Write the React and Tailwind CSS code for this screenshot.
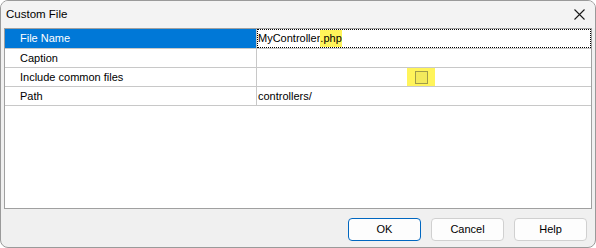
import React from "react";

const rows = [
  { name: "File Name", value: "file", selected: true },
  { name: "Caption", value: "" },
  { name: "Include common files", value: "check" },
  { name: "Path", value: "controllers/" },
];

const PropertyRow = ({ row }) => {
  return (
    <div
      className={`flex border-b border-[#c8c8c8] ${
        row.selected ? "h-[20px]" : "h-[19px]"
      }`}
    >
      <div
        className={`w-[251px] pl-[15px] flex items-center ${
          row.selected ? "bg-[#0078d7] text-white" : "text-black"
        }`}
      >
        {row.name}
      </div>
      <div className="w-px bg-[#c8c8c8]" />
      <div className="flex-1 flex items-center">
        {row.value === "file" ? (
          <div className="flex items-end h-full w-full border border-dotted border-black">
            <span className="h-[17px] flex items-center">MyController</span>
            <span className="bg-[#fff45a] h-[17px] flex items-center">.php</span>
          </div>
        ) : row.value === "check" ? (
          <div className="ml-[150px] w-[28px] h-full bg-[#fff45a] flex items-center justify-center">
            <div className="w-[13px] h-[13px] border border-[#a09c4a] bg-[#f3ea5c]" />
          </div>
        ) : (
          <span className="pl-px">{row.value}</span>
        )}
      </div>
    </div>
  );
};

export default function App() {
  return (
    <div
      className="w-[596px] h-[248px] bg-[#f0f0f0] border border-[#9a9a9a] rounded-[8px] flex flex-col text-[11px] text-black overflow-hidden"
      style={{ fontFamily: '"Liberation Sans", Arial, sans-serif' }}
    >
      <div className="h-[27px] flex items-center justify-between pl-[5px] pr-[8px] bg-[#f3f3f3]">
        <span className="text-[11.5px]">Custom File</span>
        <svg width="11" height="11" viewBox="0 0 11 11" className="mr-[2px]">
          <path d="M0.5 0.5L10.5 10.5M10.5 0.5L0.5 10.5" stroke="#1a1a1a" strokeWidth="1.1" />
        </svg>
      </div>

      <div className="mx-[3px] h-[181px] border border-[#a0a0a0] bg-white">
        {rows.map((row) => (
          <PropertyRow key={row.name} row={row} />
        ))}
      </div>

      <div className="flex justify-end gap-[10px] pr-[8px] pt-[9px]">
        <button className="w-[73px] h-[23px] rounded-[4px] border border-[#0067c0] bg-[#fdfdfd]">
          OK
        </button>
        <button className="w-[73px] h-[23px] rounded-[4px] border border-[#d0d0d0] bg-[#fdfdfd]">
          Cancel
        </button>
        <button className="w-[73px] h-[23px] rounded-[4px] border border-[#d0d0d0] bg-[#fdfdfd]">
          Help
        </button>
      </div>
    </div>
  );
}
